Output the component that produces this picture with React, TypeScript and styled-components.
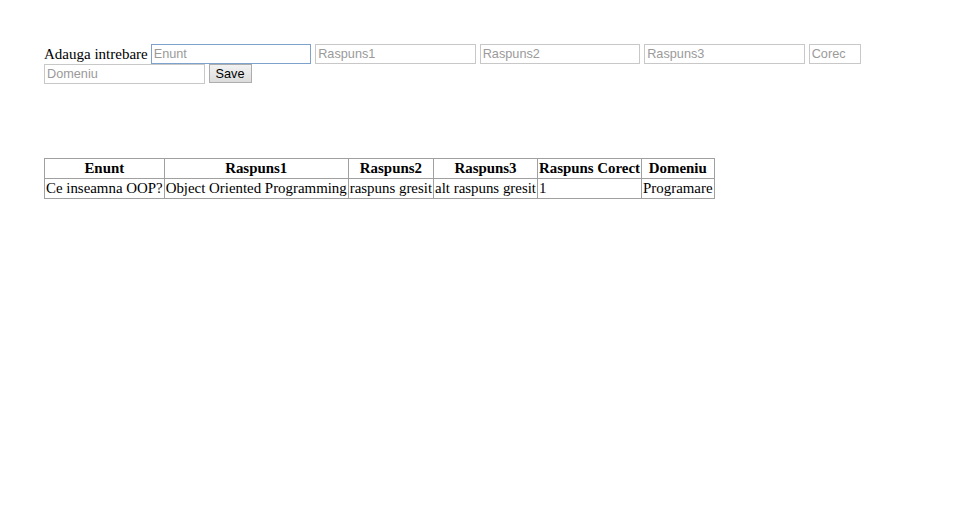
import React from 'react';
import styled, { createGlobalStyle } from 'styled-components';

const GlobalStyle = createGlobalStyle`
  body {
    margin: 0;
    background: #fff;
    font-family: "Liberation Serif", "Times New Roman", serif;
    color: #000;
  }
`;

const Page = styled.div`
  padding: 44px 0 0 44px;
`;

const Form = styled.form`
  width: 880px;
  font-size: 15px;
  line-height: 20px;
`;

const Label = styled.span`
  margin-right: 3px;
`;

const Field = styled.input<{ $w?: number; $focus?: boolean }>`
  box-sizing: border-box;
  width: ${(p) => p.$w ?? 160.5}px;
  height: 20px;
  margin: 0 4px 0 0;
  padding: 1px 2px;
  border: 1px solid ${(p) => (p.$focus ? '#7da2ce' : '#c8c8c8')};
  font-family: "Liberation Sans", Arial, sans-serif;
  font-size: 12.7px;
  color: #000;
  vertical-align: top;
  outline: none;
  &::placeholder {
    color: #9a9a9a;
  }
`;

const Button = styled.button`
  box-sizing: border-box;
  height: 19px;
  width: 43px;
  padding: 0;
  margin: 0;
  border: 1px solid #adadad;
  background: linear-gradient(#f2f2f2, #dcdcdc);
  font-family: "Liberation Sans", Arial, sans-serif;
  font-size: 12.7px;
  color: #000;
  vertical-align: top;
`;

const Table = styled.table`
  margin-top: 74px;
  border-collapse: collapse;
  font-size: 14.9px;
  line-height: 17px;
`;

const Th = styled.th`
  border: 1px solid #a0a0a0;
  padding: 1px 1px;
  font-weight: bold;
  text-align: center;
  white-space: nowrap;
`;

const Td = styled.td`
  border: 1px solid #a0a0a0;
  padding: 1px 1px;
  text-align: left;
  white-space: nowrap;
`;

const headers = ['Enunt', 'Raspuns1', 'Raspuns2', 'Raspuns3', 'Raspuns Corect', 'Domeniu'];
const rows = [
  ['Ce inseamna OOP?', 'Object Oriented Programming', 'raspuns gresit', 'alt raspuns gresit', '1', 'Programare'],
];

export default function App() {
  return (
    <Page>
      <GlobalStyle />
      <Form onSubmit={(e) => e.preventDefault()}>
        <Label>Adauga intrebare</Label>
        <Field placeholder="Enunt" $focus />
        <Field placeholder="Raspuns1" />
        <Field placeholder="Raspuns2" />
        <Field placeholder="Raspuns3" />
        <Field placeholder="Corec" $w={52} />
        <Field placeholder="Domeniu" />
        <Button type="submit">Save</Button>
      </Form>
      <Table>
        <thead>
          <tr>
            {headers.map((h) => (
              <Th key={h}>{h}</Th>
            ))}
          </tr>
        </thead>
        <tbody>
          {rows.map((r, i) => (
            <tr key={i}>
              {r.map((c, j) => (
                <Td key={j}>{c}</Td>
              ))}
            </tr>
          ))}
        </tbody>
      </Table>
    </Page>
  );
}
